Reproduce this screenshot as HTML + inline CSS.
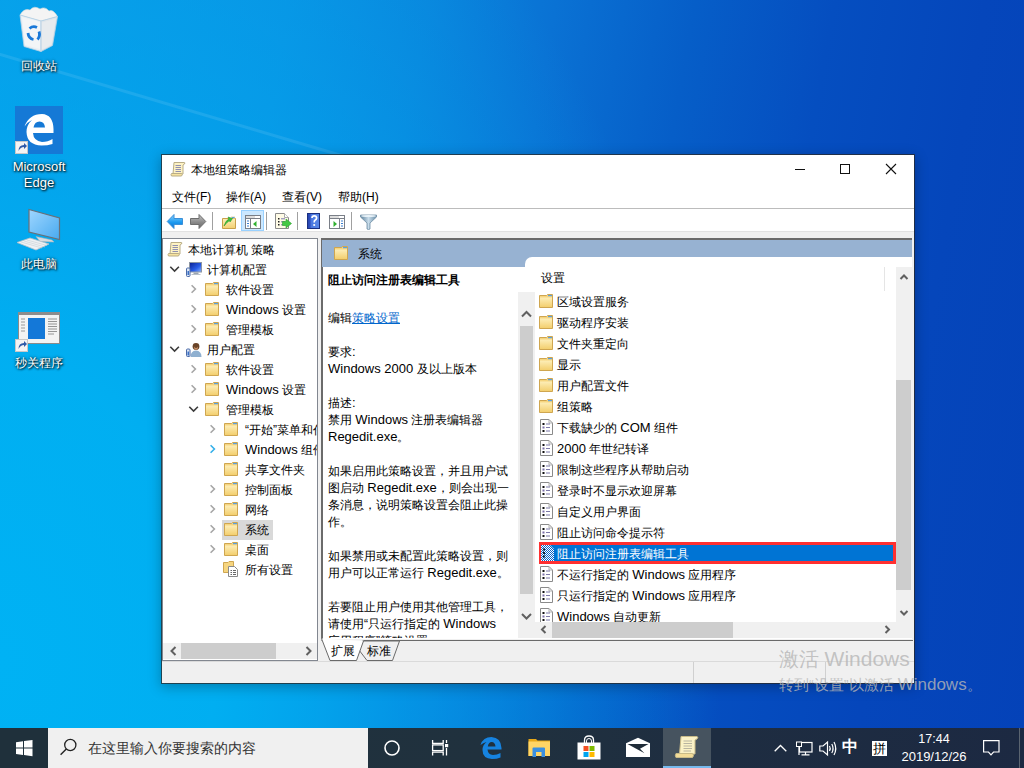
<!DOCTYPE html>
<html><head><meta charset="utf-8">
<style>
*{margin:0;padding:0;box-sizing:border-box}
html,body{width:1024px;height:768px;overflow:hidden}
body{position:relative;font-family:"Liberation Sans",sans-serif;font-size:12px;color:#000;
background:radial-gradient(ellipse 720px 980px at 0px 660px,rgba(0,178,244,1) 0%,rgba(0,176,242,.95) 30%,rgba(0,170,240,.6) 55%,rgba(0,160,240,0) 100%),linear-gradient(100deg,#0a9be6 0%,#0a90e2 25%,#0a84dc 37%,#0a72d4 48%,#065ec8 60%,#054ec0 72%,#0546bb 85%,#0442b8 100%);}
.a{position:absolute;overflow:visible}
.t{position:absolute;white-space:nowrap;line-height:14px;font-size:12px}
#desk-ray{left:-50px;top:38px;width:480px;height:3px;background:rgba(255,255,255,.09);filter:blur(.6px);transform:rotate(16.5deg);transform-origin:0 0}
.dl{color:#fff;text-shadow:1px 1px 2px rgba(0,0,0,.95),0 0 3px rgba(0,0,0,.8);text-align:center;width:76px;left:1px}
#win{left:161px;top:154px;width:754px;height:530px;background:#fff;background-clip:padding-box;border:1px solid rgba(40,40,40,.75);box-shadow:0 3px 12px rgba(0,0,0,.28)}
#taskbar{left:0;top:728px;width:1024px;height:40px;background:linear-gradient(90deg,#1f313c,#20313e 48%,#1e2d41 70%,#1c2942 100%)}
.l{font-size:13px}
.tb-sep{position:absolute;top:212px;width:1px;height:18px;background:#a0a0a0}
</style></head><body>
<svg width="0" height="0" style="position:absolute">
<defs>
 <linearGradient id="gfold" x1="0" y1="0" x2="0" y2="1"><stop offset="0" stop-color="#fdeeb8"/><stop offset="1" stop-color="#f3cf6f"/></linearGradient>
 <symbol id="c-right" viewBox="0 0 16 16"><path d="M5.6 4.2 L9.4 8 L5.6 11.8" fill="none" stroke="#a6a6a6" stroke-width="1.6"/></symbol>
 <symbol id="c-hover" viewBox="0 0 16 16"><path d="M5.6 4.2 L9.4 8 L5.6 11.8" fill="none" stroke="#35b0ea" stroke-width="1.6"/></symbol>
 <symbol id="c-down" viewBox="0 0 16 16"><path d="M3.3 5.8 L7.6 10.1 L11.9 5.8" fill="none" stroke="#3c3c3c" stroke-width="1.6"/></symbol>
 <symbol id="i-folder" viewBox="0 0 16 16">
  <path d="M1.5 2.5 H8.5 L9.5 1.5 H14.5 V14.5 H1.5 Z" fill="#f6d57f" stroke="#cfa650"/>
  <path d="M10 2 H14 V3.2 H10Z" fill="#5aa0e0"/>
  <path d="M2 4.5 H14 V14 H2Z" fill="url(#gfold)"/>
 </symbol>
 <symbol id="i-pol" viewBox="0 0 16 16">
  <path d="M2.5 0.5 H11 L14.5 4 V15.5 H2.5 Z" fill="#fff" stroke="#8a8a8a"/>
  <path d="M11 0.5 V4 H14.5" fill="none" stroke="#b0b0b0"/>
  <rect x="4.5" y="4" width="2" height="2" fill="#111"/><rect x="4.5" y="7.5" width="2" height="2" fill="#7b6fa8"/><rect x="4.5" y="11" width="2" height="2" fill="#111"/>
  <path d="M8 5H12M8 8.5H12M8 12H12" stroke="#7b78a8" stroke-width="1"/>
 </symbol>
 <symbol id="i-selpol" viewBox="0 0 16 16">
  <pattern id="dith" width="2" height="2" patternUnits="userSpaceOnUse"><rect width="2" height="2" fill="#fff"/><rect width="1" height="1" fill="#0a64c8"/><rect x="1" y="1" width="1" height="1" fill="#0a64c8"/></pattern>
  <path d="M2 0 H11 L15 4 V16 H2 Z" fill="url(#dith)"/>
  <path d="M4 4.5h2M4 8h2M4 11.5h2" stroke="#123" stroke-width="2"/>
 </symbol>
 <symbol id="i-scroll" viewBox="0 0 16 16">
  <path d="M4 1.5 H14 Q15.5 1.5 14.5 3 L13 4 V13 H3 Z" fill="#fdf2c4" stroke="#b9ad86"/>
  <path d="M1.5 12.5 H11.5 Q13 13.5 11.5 15 H1.5 Q0.5 13.7 1.5 12.5Z" fill="#f7e3a0" stroke="#b9ad86"/>
  <path d="M5.5 4.5H11M5.5 6.5H11M5.5 8.5H11M5.5 10.5H11" stroke="#8f8fb0" stroke-width="1"/>
 </symbol>
 <symbol id="i-comp" viewBox="0 0 16 16">
  <defs><linearGradient id="gscr2" x1="0" y1="0" x2="1" y2="1"><stop offset="0" stop-color="#0a1f90"/><stop offset=".6" stop-color="#2a5ee8"/><stop offset="1" stop-color="#8ab4ff"/></linearGradient></defs>
  <rect x="3.5" y="1.5" width="12" height="9.5" fill="url(#gscr2)" stroke="#8d96a3"/>
  <path d="M7.5 11.5h5v1.5h-5z" fill="#9aa4b0"/><path d="M5.5 13.5h9" stroke="#b8c0c8"/>
  <rect x="0.5" y="7" width="3.5" height="8.5" rx="1" fill="#dfe8f4" stroke="#4a6aa8"/>
  <rect x="1.5" y="10" width="1.5" height="4" fill="#3a70c8"/>
 </symbol>
 <symbol id="i-user" viewBox="0 0 16 16">
  <path d="M4.5 16 Q4.5 10 10 9.5 Q15.5 10 15.5 16Z" fill="#8fb0d0"/>
  <circle cx="10" cy="5.5" r="3.4" fill="#6a4428"/>
  <path d="M8 5.5 Q10 8.5 12 5.5 Q12 8.8 10 8.8 Q8 8.8 8 5.5Z" fill="#c89068"/>
  <rect x="0.5" y="8" width="3.5" height="7.5" rx="1" fill="#dfe8f4" stroke="#4a6aa8"/>
  <rect x="1.5" y="10.5" width="1.5" height="4" fill="#3a70c8"/>
 </symbol>
 <symbol id="i-allset" viewBox="0 0 16 16">
  <path d="M0.5 1.5 H5 L6 0.5 H10.5 V11.5 H0.5 Z" fill="#f6d57f" stroke="#cfa650"/>
  <path d="M5.5 5.5 H11.5 L14.5 8.5 V15.5 H5.5Z" fill="#fff" stroke="#8a8a8a"/>
  <path d="M7.5 9.5h1.5M7.5 11.5h1.5M7.5 13.5h1.5M10 9.5h3M10 11.5h3M10 13.5h3" stroke="#666"/>
 </symbol>
</defs></svg>

<div class="a" id="desk-ray"></div>

<!-- desktop icons -->
<!-- recycle bin -->
<svg class="a" style="left:16px;top:4px" width="48" height="52" viewBox="0 0 48 52">
 <path d="M4 11 Q8 4 14 6 Q18 1 24 5 Q29 2 33 7 Q37 5 41.5 12.5 L25 17 Z" fill="#f4f4f4" stroke="#dcdcdc" stroke-width=".6"/>
 <path d="M4 11 L25 17 L25 47.5 L8 42.5 Z" fill="#e9eff4" stroke="#b8d0e4" stroke-width=".8"/>
 <path d="M25 17 L41.5 12.5 L36.5 41.5 L25 47.5 Z" fill="#dfe5ea" stroke="#b8d0e4" stroke-width=".8"/>
 <path d="M6 13 L24 18 L24 45 L9 41Z" fill="#f3f5f7"/>
 <path d="M26 18.5 L40 14.5 L35.5 40.5 L26 45.5Z" fill="#e8ebee"/>
 <g fill="none" stroke="#1a78d8" stroke-width="2.8">
  <path d="M13.5 24.5 Q17 21.5 21 23.5"/>
  <path d="M23 27.5 Q24.5 32 21.5 35.5"/>
  <path d="M17.5 35.5 Q12.5 34.5 12 29"/>
 </g>
</svg>
<!-- edge tile -->
<div class="a" style="left:15px;top:106px;width:48px;height:48px;background:#1579d6"></div>
<svg class="a" style="left:15px;top:106px" width="48" height="48" viewBox="0 0 48 48">
 <path d="M9.5 20.5 Q14 8 27 8 Q38 8.5 38.5 23 V27 H18 Q18.5 35 27 36 Q33 36 37.5 33 V38 Q32.5 39.5 26.5 39.5 Q12 39 11.5 26 Q11.5 19 17 14 Q12.5 16 9.5 20.5Z M18.5 21.5 H30 Q29.5 15.5 24.5 15.5 Q19.5 15.5 18.5 21.5Z" fill="#fff" fill-rule="evenodd"/>
 <rect x="0.5" y="35.5" width="12" height="12" fill="#f4f4f4" stroke="#c8c8c8"/>
 <path d="M3.5 45 Q3.5 39 9 39 V37 L12 40 L9 43 V41 Q5.5 41 3.5 45Z" fill="#2f5aa8"/>
</svg>
<!-- this pc -->
<svg class="a" style="left:16px;top:208px" width="46" height="44" viewBox="0 0 46 44">
 <defs><linearGradient id="gscr" x1="0" y1="0" x2="1" y2="1"><stop offset="0" stop-color="#9fd6ff"/><stop offset="1" stop-color="#48aaf0"/></linearGradient></defs>
 <path d="M13 1.5 L43.5 10 L43.5 31.5 L13 24 Z" fill="url(#gscr)" stroke="#6a7078" stroke-width="1.2"/>
 <path d="M20 28.5 L36 32 L38 34 L24 33.5Z" fill="#d8dde2" stroke="#a8b0b8" stroke-width=".6"/>
 <path d="M1 34.5 L14 30 L33 36 L20 42Z" fill="#eef1f4" stroke="#b8c0c8" stroke-width=".8"/>
 <path d="M5 34 L26 40M8 33 L29 39M11 32 L31 37.5" stroke="#c8ced4" stroke-width=".6"/>
</svg>
<!-- app window icon -->
<svg class="a" style="left:15px;top:311px" width="48" height="42" viewBox="0 0 48 42">
 <rect x="3.5" y="1.5" width="41" height="31" fill="#f3f3f3" stroke="#8a8a8a"/>
 <rect x="3" y="1" width="42" height="3" fill="#8c8c8c"/>
 <rect x="13" y="7" width="17" height="21" fill="#1478d8"/>
 <path d="M6 8h4M6 11h4M6 14h4M6 17h4M6 20h4" stroke="#9a9a9a"/>
 <path d="M33 8h9M33 10.5h9M33 13h9M33 15.5h9M33 18h9M33 20.5h9M33 23h6" stroke="#8a8a8a" stroke-width=".9"/>
 <rect x="0.5" y="28.5" width="12" height="12" fill="#f4f4f4" stroke="#c8c8c8"/>
 <path d="M3.5 38 Q3.5 32 9 32 V30 L12 33 L9 36 V34 Q5.5 34 3.5 38Z" fill="#2f5aa8"/>
</svg>

<div class="t dl" style="top:59px">回收站</div>
<div class="t dl" style="top:159.5px;font-size:13px">Microsoft</div>
<div class="t dl" style="top:176px;font-size:13px">Edge</div>
<div class="t dl" style="top:257px">此电脑</div>
<div class="t dl" style="top:356px">秒关程序</div>

<div class="a" id="win"></div>
<!-- title -->
<svg class="a" style="left:170px;top:161px" width="16" height="16"><use href="#i-scroll"/></svg>
<div class="t" style="left:191px;top:162.5px">本地组策略编辑器</div>
<svg class="a" style="left:795px;top:164px" width="11" height="11"><path d="M0 5.5H10" stroke="#111" stroke-width="1"/></svg>
<svg class="a" style="left:840px;top:164px" width="11" height="11"><rect x="0.5" y="0.5" width="9" height="9" fill="none" stroke="#111"/></svg>
<svg class="a" style="left:886px;top:164px" width="11" height="11"><path d="M0 0L10 10M10 0L0 10" stroke="#111" stroke-width="1.1"/></svg>
<!-- menu -->
<div class="t" style="left:172px;top:190px">文件(F)</div>
<div class="t" style="left:226px;top:190px">操作(A)</div>
<div class="t" style="left:282px;top:190px">查看(V)</div>
<div class="t" style="left:338px;top:190px">帮助(H)</div>
<div class="a" style="left:162px;top:208px;width:752px;height:1px;background:#bcbcbc"></div>
<div class="a" style="left:162px;top:231px;width:752px;height:1px;background:#e2e2e2"></div>
<!-- toolbar -->
<div class="a" style="left:162px;top:232px;width:752px;height:451px;background:#f0f0f0"></div>
<div class="tb-sep" style="left:212px"></div>
<div class="tb-sep" style="left:266px"></div>
<div class="tb-sep" style="left:297px"></div>
<div class="tb-sep" style="left:351px"></div>
<div class="a" style="left:241px;top:210px;width:23px;height:21px;background:#cce8ff;border:1px solid #99d1ff"></div>
<svg class="a" style="left:166px;top:213px" width="18" height="17" viewBox="0 0 18 17">
 <defs><linearGradient id="gback" x1="0" y1="0" x2="0" y2="1"><stop offset="0" stop-color="#8fd4ff"/><stop offset=".55" stop-color="#1b9af0"/><stop offset="1" stop-color="#0a6fd0"/></linearGradient>
 <linearGradient id="gfwd" x1="0" y1="0" x2="0" y2="1"><stop offset="0" stop-color="#c8c8c8"/><stop offset=".55" stop-color="#8a8a8a"/><stop offset="1" stop-color="#6a6a6a"/></linearGradient></defs>
 <path d="M1.2 8.5 L8 1.5 V5.5 H16.5 V11.5 H8 V15.5 Z" fill="url(#gback)" stroke="#3a8fd8" stroke-width="1" stroke-linejoin="round"/>
</svg>
<svg class="a" style="left:189px;top:213px" width="18" height="17" viewBox="0 0 18 17">
 <path d="M16.8 8.5 L10 1.5 V5.5 H1.5 V11.5 H10 V15.5 Z" fill="url(#gfwd)" stroke="#6e6e6e" stroke-width="1" stroke-linejoin="round"/>
</svg>
<svg class="a" style="left:221px;top:214px" width="16" height="16" viewBox="0 0 16 16">
 <path d="M1.5 4.5 H14.5 V14.5 H1.5Z" fill="url(#gfold)" stroke="#c9a04a"/>
 <path d="M10 2.5h4v2h-4z" fill="#e8d9a8"/><path d="M11 3h2.5v1h-2.5z" fill="#5a9fe0"/>
 <path d="M3 12 Q5 6 8 5 L7 3 L11.5 4.5 L9 8 L8.5 6.5 Q6 8 3 12Z" fill="#3cc23c" stroke="#2a9a2a" stroke-width=".6"/>
</svg>
<svg class="a" style="left:245px;top:215px" width="16" height="15" viewBox="0 0 16 15">
 <rect x="0.5" y="0.5" width="15" height="13" fill="#fff" stroke="#7a7f88"/>
 <path d="M1 3.5H15" stroke="#7a7f88"/><path d="M1 2H10" stroke="#bbb"/>
 <path d="M5.5 4V13.5" stroke="#7a7f88"/>
 <path d="M2 6h2M2 8.5h2M2 11h2" stroke="#3a7fd0" stroke-width="1.2"/>
 <path d="M11.5 6 L8 9 L11.5 12Z" fill="#30b030"/>
</svg>
<svg class="a" style="left:275px;top:213px" width="17" height="17" viewBox="0 0 17 17">
 <path d="M0.5 0.5H9.5L13.5 4.5V15.5H0.5Z" fill="#fffbe6" stroke="#8a8a8a"/>
 <path d="M9.5 0.5V4.5H13.5" fill="#fff" stroke="#aaa"/>
 <rect x="3" y="5" width="1.5" height="1.5" fill="#222"/><rect x="3" y="8" width="1.5" height="1.5" fill="#222"/><rect x="3" y="11" width="1.5" height="1.5" fill="#222"/>
 <path d="M6 5.8H10M6 8.8H10M6 11.8H10" stroke="#7a78b0"/>
 <path d="M7.5 8.5H11V6L16.5 10.5L11 15V12.5H7.5Z" fill="#44c844" stroke="#2ea02e" stroke-width=".6"/>
</svg>
<svg class="a" style="left:307px;top:213px" width="14" height="16" viewBox="0 0 14 16">
 <defs><linearGradient id="ghelp" x1="0" y1="0" x2="1" y2="0"><stop offset="0" stop-color="#2040a8"/><stop offset=".25" stop-color="#3050c0"/><stop offset=".3" stop-color="#4a78e0"/><stop offset="1" stop-color="#5a88e8"/></linearGradient></defs>
 <rect x="0" y="0" width="13" height="16" fill="url(#ghelp)"/>
 <rect x="0.5" y="0.5" width="12" height="15" fill="none" stroke="#1a2f80"/>
 <path d="M5 5 Q5 2.8 7.3 2.8 Q9.6 2.8 9.6 5 Q9.6 6.5 8 7.3 Q7.2 7.8 7.2 9.5" fill="none" stroke="#fff" stroke-width="1.7"/>
 <circle cx="7.2" cy="12" r="1.1" fill="#fff"/>
</svg>
<svg class="a" style="left:329px;top:215px" width="16" height="15" viewBox="0 0 16 15">
 <rect x="0.5" y="0.5" width="15" height="13" fill="#fff" stroke="#7a7f88"/>
 <path d="M1 3.5H15" stroke="#7a7f88"/><path d="M1 2H10" stroke="#bbb"/>
 <path d="M10.5 4V13.5" stroke="#7a7f88"/>
 <path d="M12 6h2M12 8.5h2M12 11h2" stroke="#3a7fd0" stroke-width="1.2"/>
 <path d="M4.5 6 L8 9 L4.5 12Z" fill="#30b030"/>
</svg>
<svg class="a" style="left:360px;top:214px" width="17" height="16" viewBox="0 0 17 16">
 <defs><linearGradient id="gfil" x1="0" y1="0" x2="1" y2="0"><stop offset="0" stop-color="#5a7f9a"/><stop offset=".5" stop-color="#c8dcea"/><stop offset="1" stop-color="#6a8ea8"/></linearGradient></defs>
 <path d="M0.5 1 H16.5 V3 L10 9 V15 Q8.5 16 7 15 V9 L0.5 3Z" fill="url(#gfil)" stroke="#6f8ea5" stroke-width=".8"/>
 <ellipse cx="8.5" cy="2" rx="7.5" ry="1" fill="#e8f2f8"/>
</svg>


<!-- tree pane -->
<div class="a" style="left:162px;top:238px;width:156px;height:423px;background:#fff;border:1px solid #828790"></div>
<div class="a" style="left:163px;top:643px;width:154px;height:16px;background:#f0f0f0"></div>
<div class="a" style="left:181px;top:643px;width:95px;height:16px;background:#cdcdcd"></div>
<div class="a" style="left:0;top:0;width:1024px;height:768px;clip-path:inset(239px 707px 125px 163px)"><svg class="a" style="left:167px;top:241px" width="16" height="16"><use href="#i-scroll"/></svg>
<div class="t tr" style="left:188px;top:242.5px">本地计算机 策略</div>
<svg class="a" style="left:167px;top:261px" width="16" height="16"><use href="#c-down"/></svg>
<svg class="a" style="left:186px;top:261px" width="16" height="16"><use href="#i-comp"/></svg>
<div class="t tr" style="left:207px;top:262.5px">计算机配置</div>
<svg class="a" style="left:186px;top:281px" width="16" height="16"><use href="#c-right"/></svg>
<svg class="a" style="left:204px;top:281px" width="16" height="16"><use href="#i-folder"/></svg>
<div class="t tr" style="left:226px;top:282.5px">软件设置</div>
<svg class="a" style="left:186px;top:301px" width="16" height="16"><use href="#c-right"/></svg>
<svg class="a" style="left:204px;top:301px" width="16" height="16"><use href="#i-folder"/></svg>
<div class="t tr" style="left:226px;top:302.5px"><span class="l">Windows</span> 设置</div>
<svg class="a" style="left:186px;top:321px" width="16" height="16"><use href="#c-right"/></svg>
<svg class="a" style="left:204px;top:321px" width="16" height="16"><use href="#i-folder"/></svg>
<div class="t tr" style="left:226px;top:322.5px">管理模板</div>
<svg class="a" style="left:167px;top:341px" width="16" height="16"><use href="#c-down"/></svg>
<svg class="a" style="left:186px;top:341px" width="16" height="16"><use href="#i-user"/></svg>
<div class="t tr" style="left:207px;top:342.5px">用户配置</div>
<svg class="a" style="left:186px;top:361px" width="16" height="16"><use href="#c-right"/></svg>
<svg class="a" style="left:204px;top:361px" width="16" height="16"><use href="#i-folder"/></svg>
<div class="t tr" style="left:226px;top:362.5px">软件设置</div>
<svg class="a" style="left:186px;top:381px" width="16" height="16"><use href="#c-right"/></svg>
<svg class="a" style="left:204px;top:381px" width="16" height="16"><use href="#i-folder"/></svg>
<div class="t tr" style="left:226px;top:382.5px"><span class="l">Windows</span> 设置</div>
<svg class="a" style="left:186px;top:401px" width="16" height="16"><use href="#c-down"/></svg>
<svg class="a" style="left:204px;top:401px" width="16" height="16"><use href="#i-folder"/></svg>
<div class="t tr" style="left:226px;top:402.5px">管理模板</div>
<svg class="a" style="left:205px;top:421px" width="16" height="16"><use href="#c-right"/></svg>
<svg class="a" style="left:223px;top:421px" width="16" height="16"><use href="#i-folder"/></svg>
<div class="t tr" style="left:245px;top:422.5px">“开始”菜单和任务栏</div>
<svg class="a" style="left:205px;top:441px" width="16" height="16"><use href="#c-hover"/></svg>
<svg class="a" style="left:223px;top:441px" width="16" height="16"><use href="#i-folder"/></svg>
<div class="t tr" style="left:245px;top:442.5px"><span class="l">Windows</span> 组件</div>
<svg class="a" style="left:223px;top:461px" width="16" height="16"><use href="#i-folder"/></svg>
<div class="t tr" style="left:245px;top:462.5px">共享文件夹</div>
<svg class="a" style="left:205px;top:481px" width="16" height="16"><use href="#c-right"/></svg>
<svg class="a" style="left:223px;top:481px" width="16" height="16"><use href="#i-folder"/></svg>
<div class="t tr" style="left:245px;top:482.5px">控制面板</div>
<svg class="a" style="left:205px;top:501px" width="16" height="16"><use href="#c-right"/></svg>
<svg class="a" style="left:223px;top:501px" width="16" height="16"><use href="#i-folder"/></svg>
<div class="t tr" style="left:245px;top:502.5px">网络</div>
<div class="a" style="left:222px;top:520px;width:51px;height:20px;background:#d9d9d9"></div>
<svg class="a" style="left:205px;top:521px" width="16" height="16"><use href="#c-right"/></svg>
<svg class="a" style="left:223px;top:521px" width="16" height="16"><use href="#i-folder"/></svg>
<div class="t tr" style="left:245px;top:522.5px">系统</div>
<svg class="a" style="left:205px;top:541px" width="16" height="16"><use href="#c-right"/></svg>
<svg class="a" style="left:223px;top:541px" width="16" height="16"><use href="#i-folder"/></svg>
<div class="t tr" style="left:245px;top:542.5px">桌面</div>
<svg class="a" style="left:223px;top:561px" width="16" height="16"><use href="#i-allset"/></svg>
<div class="t tr" style="left:245px;top:562.5px">所有设置</div></div>

<!-- right pane -->
<div class="a" style="left:321px;top:238px;width:591px;height:401px;background:#fff;border-top:2px solid #6b6b6b;border-left:2px solid #6b6b6b"></div>
<div class="a" style="left:322px;top:240px;width:590px;height:27px;background:#97b2d2"></div>
<div class="a" style="left:525px;top:257px;width:387px;height:20px;background:#fff;border-top-left-radius:7px"></div>
<svg class="a" style="left:333px;top:245px" width="16" height="16"><use href="#i-folder"/></svg>
<div class="t" style="left:358px;top:246.5px">系统</div>
<div class="t" style="left:328px;top:273px;font-weight:bold">阻止访问注册表编辑工具</div>
<div class="t" style="left:328px;top:310.5px">编辑<span style="color:#0066cc;text-decoration:underline">策略设置</span></div>
<div class="a" style="left:0;top:0;width:1024px;height:768px;clip-path:inset(266px 506px 130px 322px)"><div class="t" style="left:328px;top:344.5px">要求<span class="l">:</span></div>
<div class="t" style="left:328px;top:361.5px"><span class="l">Windows 2000</span> 及以上版本</div>
<div class="t" style="left:328px;top:395.5px">描述<span class="l">:</span></div>
<div class="t" style="left:328px;top:412.5px">禁用 <span class="l">Windows</span> 注册表编辑器</div>
<div class="t" style="left:328px;top:429.5px"><span class="l">Regedit.exe</span>。</div>
<div class="t" style="left:328px;top:463.5px">如果启用此策略设置，并且用户试</div>
<div class="t" style="left:328px;top:480.5px">图启动 <span class="l">Regedit.exe</span>，则会出现一</div>
<div class="t" style="left:328px;top:497.5px">条消息，说明策略设置会阻止此操</div>
<div class="t" style="left:328px;top:514.5px">作。</div>
<div class="t" style="left:328px;top:548.5px">如果禁用或未配置此策略设置，则</div>
<div class="t" style="left:328px;top:565.5px">用户可以正常运行 <span class="l">Regedit.exe</span>。</div>
<div class="t" style="left:328px;top:599.5px">若要阻止用户使用其他管理工具，</div>
<div class="t" style="left:328px;top:616.5px">请使用“只运行指定的 <span class="l">Windows</span></div>
<div class="t" style="left:328px;top:633.5px">应用程序”策略设置。</div></div>
<!-- desc scrollbar -->
<div class="a" style="left:518px;top:292px;width:17px;height:346px;background:#f0f0f0"></div>
<div class="a" style="left:520px;top:326px;width:13px;height:268px;background:#cdcdcd"></div>
<div class="a" style="left:0;top:0;width:1024px;height:768px;clip-path:inset(291px 128px 146px 535px)"><svg class="a" style="left:538px;top:293px" width="16" height="16"><use href="#i-folder"/></svg>
<div class="t" style="left:557px;top:294.5px">区域设置服务</div>
<svg class="a" style="left:538px;top:314px" width="16" height="16"><use href="#i-folder"/></svg>
<div class="t" style="left:557px;top:315.5px">驱动程序安装</div>
<svg class="a" style="left:538px;top:335px" width="16" height="16"><use href="#i-folder"/></svg>
<div class="t" style="left:557px;top:336.5px">文件夹重定向</div>
<svg class="a" style="left:538px;top:356px" width="16" height="16"><use href="#i-folder"/></svg>
<div class="t" style="left:557px;top:357.5px">显示</div>
<svg class="a" style="left:538px;top:377px" width="16" height="16"><use href="#i-folder"/></svg>
<div class="t" style="left:557px;top:378.5px">用户配置文件</div>
<svg class="a" style="left:538px;top:398px" width="16" height="16"><use href="#i-folder"/></svg>
<div class="t" style="left:557px;top:399.5px">组策略</div>
<svg class="a" style="left:538px;top:419px" width="16" height="16"><use href="#i-pol"/></svg>
<div class="t" style="left:557px;top:420.5px">下载缺少的 <span class="l">COM</span> 组件</div>
<svg class="a" style="left:538px;top:440px" width="16" height="16"><use href="#i-pol"/></svg>
<div class="t" style="left:557px;top:441.5px"><span class="l">2000</span> 年世纪转译</div>
<svg class="a" style="left:538px;top:461px" width="16" height="16"><use href="#i-pol"/></svg>
<div class="t" style="left:557px;top:462.5px">限制这些程序从帮助启动</div>
<svg class="a" style="left:538px;top:482px" width="16" height="16"><use href="#i-pol"/></svg>
<div class="t" style="left:557px;top:483.5px">登录时不显示欢迎屏幕</div>
<svg class="a" style="left:538px;top:503px" width="16" height="16"><use href="#i-pol"/></svg>
<div class="t" style="left:557px;top:504.5px">自定义用户界面</div>
<svg class="a" style="left:538px;top:524px" width="16" height="16"><use href="#i-pol"/></svg>
<div class="t" style="left:557px;top:525.5px">阻止访问命令提示符</div>
<div class="a" style="left:539px;top:542px;width:357px;height:22px;border:3px solid #ff3030;background:#0074d4"></div>
<svg class="a" style="left:539px;top:545px" width="16" height="16"><use href="#i-selpol"/></svg>
<div class="t" style="left:557px;top:546.5px;color:#fff">阻止访问注册表编辑工具</div>
<svg class="a" style="left:538px;top:566px" width="16" height="16"><use href="#i-pol"/></svg>
<div class="t" style="left:557px;top:567.5px">不运行指定的 <span class="l">Windows</span> 应用程序</div>
<svg class="a" style="left:538px;top:587px" width="16" height="16"><use href="#i-pol"/></svg>
<div class="t" style="left:557px;top:588.5px">只运行指定的 <span class="l">Windows</span> 应用程序</div>
<svg class="a" style="left:538px;top:608px" width="16" height="16"><use href="#i-pol"/></svg>
<div class="t" style="left:557px;top:609.5px"><span class="l">Windows</span> 自动更新</div></div>
<div class="a" style="left:884px;top:267px;width:1px;height:24px;background:#e5e5e5"></div>
<div class="t" style="left:541px;top:271px">设置</div>
<!-- list scrollbars -->
<div class="a" style="left:896px;top:267px;width:16px;height:355px;background:#f0f0f0"></div>
<div class="a" style="left:896px;top:380px;width:15px;height:210px;background:#cdcdcd"></div>
<div class="a" style="left:535px;top:622px;width:377px;height:16px;background:#f0f0f0"></div>
<div class="a" style="left:552px;top:622px;width:181px;height:16px;background:#cdcdcd"></div>


<!-- status bar -->
<svg class="a" style="left:0;top:0" width="1024" height="768" viewBox="0 0 1024 768">
 <g fill="none" stroke="#606060" stroke-width="2" stroke-linejoin="miter">
  <path d="M175.5 647 L171.5 651 L175.5 655"/>
  <path d="M306.5 647 L310.5 651 L306.5 655"/>
  <path d="M522 316.5 L526.5 312 L531 316.5"/>
  <path d="M522 614 L526.5 618.5 L531 614"/>
  <path d="M900.5 279 L904 275.5 L907.5 279"/>
  <path d="M900.5 611 L904 614.5 L907.5 611"/>
  <path d="M545.5 626 L542 629.5 L545.5 633"/>
  <path d="M885.5 626 L889 629.5 L885.5 633"/>
 </g>
</svg>
<!-- tabs -->
<svg class="a" style="left:0;top:0" width="1024" height="768" viewBox="0 0 1024 768">
 <path d="M362.5 641 L366 641 L399.5 641 L392.5 660.5 L367 660.5 L359 650" fill="#f0f0f0" stroke="#6a6a6a" stroke-width="1"/>
 <path d="M321.5 638.5 L363 641 L356.5 660.5 L330 660.5 Z" fill="#fff" stroke="none"/>
 <path d="M321.5 638.5 L330 660.5 L356.5 660.5 L363.5 641" fill="none" stroke="#6a6a6a" stroke-width="1"/>
 <path d="M322 640.5 L321.5 640.5" stroke="#6a6a6a"/>
 <path d="M363.5 640.5 L913 640.5" stroke="#6a6a6a"/>
 <path d="M162 661.5 H914" stroke="#dadada"/>
 <path d="M693.5 662 V683M825.5 662 V683" stroke="#d0d0d0"/>
</svg>
<div class="t" style="left:331px;top:643.5px">扩展</div>
<div class="t" style="left:367px;top:643.5px">标准</div>




<div class="a" id="taskbar"></div>
<div class="a" style="left:0;top:728px;width:48px;height:40px;background:#1f303b"></div>
<svg class="a" style="left:16px;top:740px" width="17" height="17" viewBox="0 0 17 17">
 <path d="M0 2.3 L7 1.3 V7.6 H0Z M8 1.1 L16.5 0 V7.6 H8Z M0 8.6 H7 V14.9 L0 13.9Z M8 8.6 H16.5 V16.3 L8 15.1Z" fill="#fff"/>
</svg>
<div class="a" style="left:48px;top:728px;width:320px;height:40px;background:#f0f0f0"></div>
<svg class="a" style="left:58px;top:737px" width="20" height="20" viewBox="0 0 20 20">
 <circle cx="12.3" cy="8" r="5.6" fill="none" stroke="#222" stroke-width="1.3"/>
 <path d="M8.3 12 L2.6 17.8" stroke="#222" stroke-width="1.4"/>
</svg>
<div class="t" style="left:88px;top:740px;color:#333;font-size:14px;line-height:16px">在这里输入你要搜索的内容</div>
<svg class="a" style="left:383px;top:739px" width="18" height="18" viewBox="0 0 18 18"><circle cx="9" cy="9" r="7" fill="none" stroke="#fff" stroke-width="1.6"/></svg>
<svg class="a" style="left:431px;top:739px" width="18" height="17" viewBox="0 0 18 17">
 <path d="M1.6 1 V4.3 H12.2 V1 M1.6 16.5 V13.2 H12.2 V16.5" fill="none" stroke="#fff" stroke-width="1.3"/>
 <rect x="1.6" y="5.9" width="10.6" height="5.7" fill="none" stroke="#fff" stroke-width="1.3"/>
 <path d="M15.5 1V4M15.5 9V16.5" stroke="#fff" stroke-width="1.3"/>
 <rect x="14" y="5" width="3.2" height="3.2" fill="#fff"/>
</svg>
<svg class="a" style="left:480px;top:736px" width="22" height="23" viewBox="0 0 22 23">
 <path d="M0.5 9 Q3 1 11.5 1 Q21 1.5 21.5 12 V13.5 H7.5 Q8 18.5 13 19 Q17 19 20.5 17 V21.5 Q17 23 12 23 Q2.5 22.5 2.5 14 Q2.5 9 6.5 6 Q3 7 0.5 9Z M7.8 10.5 H15.5 Q15 6 11.7 6 Q8.5 6 7.8 10.5Z" fill="#1683e0" fill-rule="evenodd"/>
</svg>
<svg class="a" style="left:528px;top:738px" width="23" height="20" viewBox="0 0 23 20">
 <path d="M0.5 1 H8 L9.5 2.5 H22 V18 H0.5Z" fill="#e8a818"/>
 <rect x="0.5" y="3.5" width="21.5" height="14.5" fill="#ffd566"/>
 <path d="M4.5 10.5 Q4.5 9.5 5.5 9.5 H16 Q17 9.5 17 10.5 V19 H13.5 V14 H8 V19 H4.5Z" fill="#3a8fe0"/>
</svg>
<svg class="a" style="left:577px;top:735px" width="24" height="25" viewBox="0 0 24 25">
 <path d="M7.5 8 V5 Q7.5 1 12 1 Q16.5 1 16.5 5 V8" fill="none" stroke="#fff" stroke-width="1.3"/>
 <path d="M9.5 8 V6 Q9.5 3.5 12 3.5 Q14.5 3.5 14.5 6 V8" fill="none" stroke="#fff" stroke-width="1"/>
 <rect x="0.5" y="7.5" width="23" height="17" fill="#fff"/>
 <rect x="6.5" y="11" width="5" height="5" fill="#f25022"/><rect x="12.5" y="11" width="5" height="5" fill="#7fba00"/>
 <rect x="6.5" y="17" width="5" height="5" fill="#00a4ef"/><rect x="12.5" y="17" width="5" height="5" fill="#ffb900"/>
</svg>
<svg class="a" style="left:626px;top:737px" width="24" height="21" viewBox="0 0 24 21">
 <path d="M0 6.3 L12 0.7 L24 6.3 V20 H0Z" fill="#fff"/>
 <path d="M1.5 7 H22.5 L14 11.7 L18.5 16.3Z" fill="#1f2c38"/>
</svg>
<div class="a" style="left:663px;top:728px;width:48px;height:40px;background:#46535f"></div>
<div class="a" style="left:663px;top:766px;width:48px;height:2px;background:#76b9ed"></div>
<svg class="a" style="left:675px;top:735px" width="24" height="24" viewBox="0 0 24 24">
 <path d="M6 1.5 H22 Q23.5 2 22 4 L20 5 V19 H4.5 Z" fill="#fbf2c6" stroke="#c9bb88"/>
 <path d="M1 18.5 H17.5 Q19.5 20.5 17.5 22.5 H1 Q-0.3 20.5 1 18.5Z" fill="#f3dc98" stroke="#c9bb88"/>
 <path d="M8.5 6H17M8.5 8.5H17M8.5 11H17M8.5 13.5H17M8.5 16H16" stroke="#b8b4a0" stroke-width="1"/>
</svg>
<!-- tray -->
<svg class="a" style="left:774px;top:744px" width="13" height="8" viewBox="0 0 13 8"><path d="M0.7 7.3 L6.5 1.5 L12.3 7.3" fill="none" stroke="#fff" stroke-width="1.3"/></svg>
<svg class="a" style="left:796px;top:741px" width="17" height="15" viewBox="0 0 17 15">
 <rect x="3.5" y="1.5" width="12.5" height="9.5" fill="none" stroke="#fff" stroke-width="1.2"/>
 <rect x="0.5" y="1" width="5" height="4.5" fill="#1e2a3a" stroke="#fff" stroke-width="1"/>
 <path d="M3 6V14M9.5 11V13.5M5.5 13.8H13.5" stroke="#fff" stroke-width="1.2"/>
</svg>
<svg class="a" style="left:819px;top:741px" width="18" height="15" viewBox="0 0 18 15">
 <path d="M0.8 5 H4 L8.5 1 V14 L4 10 H0.8Z" fill="none" stroke="#fff" stroke-width="1.2"/>
 <path d="M10.5 5 Q12 7.5 10.5 10M12.8 3 Q15.3 7.5 12.8 12M15 1 Q18.5 7.5 15 14" fill="none" stroke="#fff" stroke-width="1.2"/>
</svg>
<div class="t" style="left:842px;top:738px;color:#fff;font-size:16px;line-height:18px;font-weight:bold">中</div>
<div class="a" style="left:872px;top:741px;width:15px;height:15px;background:#fff"></div>
<div class="t" style="left:873px;top:741px;color:#000;font-size:13px;line-height:15px">拼</div>
<div class="t" style="left:899px;top:731.5px;width:70px;text-align:center;color:#fff;font-size:12.5px">17:44</div>
<div class="t" style="left:899px;top:750px;width:70px;text-align:center;color:#fff;font-size:13px">2019/12/26</div>
<svg class="a" style="left:983px;top:740px" width="17" height="17" viewBox="0 0 17 17"><path d="M0.6 0.6 H16 V12 H10.5 L8 14.8 L5.5 12 H0.6Z" fill="none" stroke="#fff" stroke-width="1.2"/></svg>
<div class="a" style="left:1019px;top:728px;width:1px;height:40px;background:#5a6470"></div>
<!-- watermark -->
<div class="t" style="left:779px;top:648px;font-size:20px;line-height:22px;color:rgba(182,182,182,.8)">激活 <span style="font-size:21px">Windows</span></div>
<div class="t" style="left:779px;top:675.5px;font-size:14.5px;line-height:17px;color:rgba(182,182,182,.8)">转到“设置”以激活 <span style="font-size:17px">Windows</span>。</div>

</body></html>
